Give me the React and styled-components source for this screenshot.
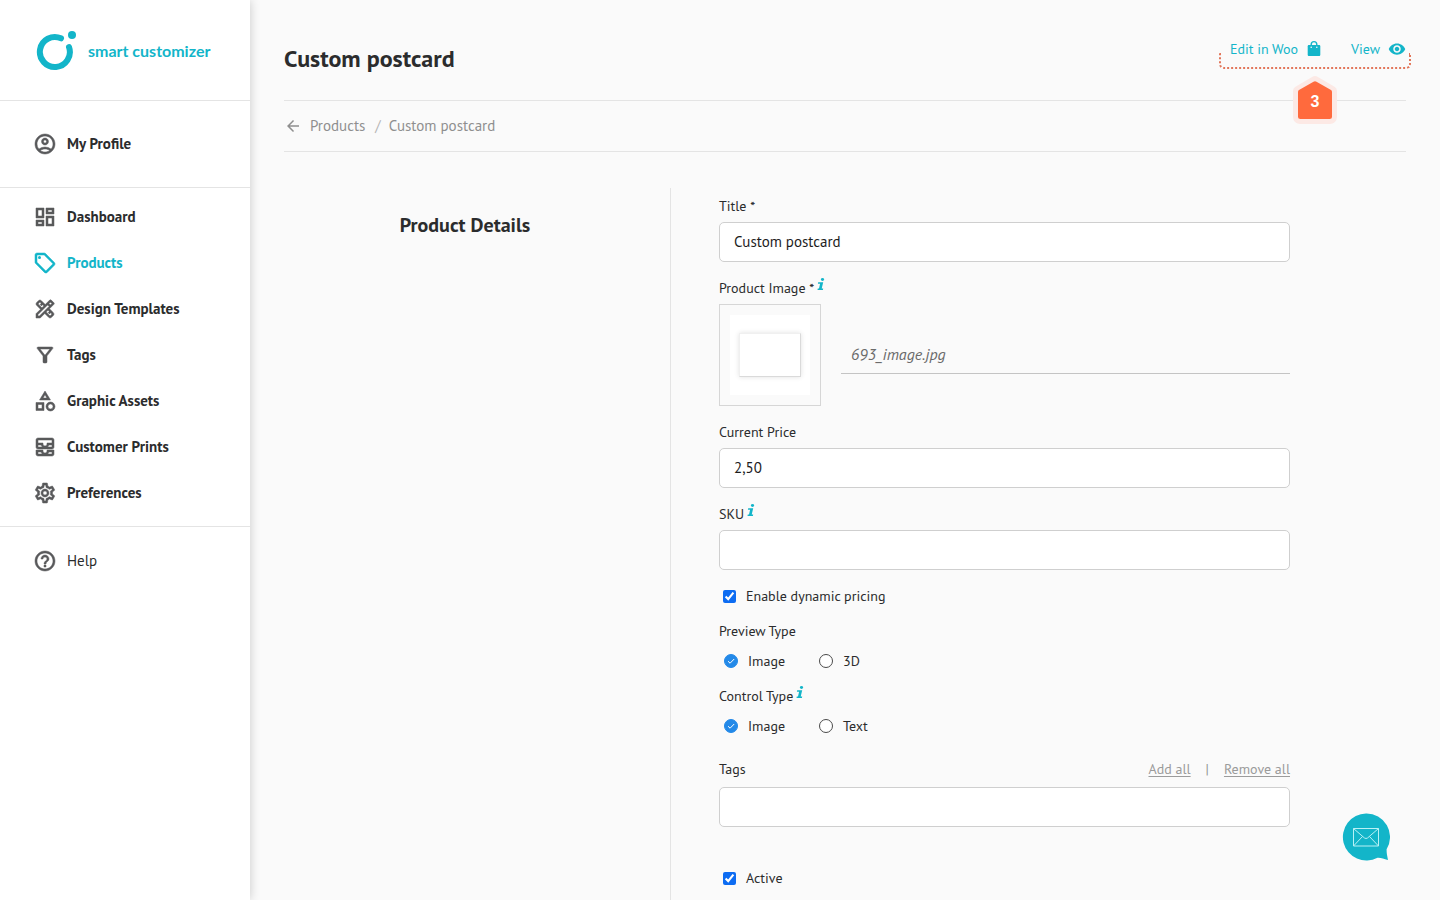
import React, { useState } from 'react'
import styled, { createGlobalStyle, ThemeProvider } from 'styled-components'
import {
  MdArrowBack,
  MdHelpOutline,
  MdOutlineAccountCircle,
  MdOutlineAllInbox,
  MdOutlineCategory,
  MdOutlineDashboard,
  MdOutlineDesignServices,
  MdOutlineFilterAlt,
  MdOutlineSell,
  MdOutlineSettings,
  MdVisibility,
} from 'react-icons/md'

const theme = {
  colors: {
    accent: '#13b5c9',
    text: '#2b2c2d',
    icon: '#58595b',
    muted: '#8f8f8f',
    line: '#e4e4e4',
    field: '#cfcfcf',
    page: '#fafafa',
    callout: '#ff6a3d',
    calloutHalo: '#fce9e5',
    checkbox: '#0d6cf2',
    radio: '#2389e8',
  },
  fonts: {
    body: '"PT Sans", "Noto Sans", sans-serif',
    logo: 'Lato, sans-serif',
  },
}

const GlobalStyle = createGlobalStyle`
  * {
    box-sizing: border-box;
  }

  body {
    margin: 0;
    background: ${props => props.theme.colors.page};
    color: ${props => props.theme.colors.text};
    font-family: ${props => props.theme.fonts.body};
    font-size: 14px;
    line-height: 20px;
  }

  h1, h2, ul, fieldset {
    margin: 0;
    padding: 0;
    border: 0;
  }

  a {
    color: inherit;
    text-decoration: none;
  }
`

const Page = styled.div`
  display: flex;
  min-height: 100vh;
`

const Sidebar = styled.aside`
  flex: 0 0 250px;
  background: #fff;
  box-shadow: 0 0 10px rgba(0, 0, 0, 0.2);
`

const LogoLink = styled.a`
  display: flex;
  align-items: center;
  gap: 10px;
  height: 101px;
  padding: 2px 0 0 36px;
  border-bottom: 1px solid ${props => props.theme.colors.line};
  color: ${props => props.theme.colors.accent};
  font-family: ${props => props.theme.fonts.logo};
  font-size: 16px;
  font-weight: 700;
`

const NavGroup = styled.ul`
  list-style: none;
  padding: ${props => props.$padding};
  border-bottom: ${props => (props.$last ? 'none' : `1px solid ${props.theme.colors.line}`)};
`

const NavLink = styled.a`
  display: flex;
  align-items: center;
  gap: 10px;
  height: 46px;
  padding-left: 33px;
  color: ${props => (props.$active ? props.theme.colors.accent : props.theme.colors.text)};
  font-size: 15px;
  font-weight: ${props => (props.$light ? 400 : 700)};

  svg {
    flex: none;
    width: 24px;
    height: 24px;
    color: ${props => (props.$active ? props.theme.colors.accent : props.theme.colors.icon)};
  }

  path:not([fill='none']) {
    stroke-width: 0.5px;
  }
`

const Main = styled.main`
  flex: 1;
  display: flex;
  flex-direction: column;
  min-width: 0;
  padding: 0 34px;
`

const Header = styled.header`
  display: flex;
  justify-content: space-between;
  align-items: flex-start;
  padding: 39px 0 21px;
  border-bottom: 1px solid ${props => props.theme.colors.line};
`

const PageTitle = styled.h1`
  font-size: 24px;
  font-weight: 700;
  line-height: 40px;
`

const Actions = styled.div`
  position: relative;
  display: flex;
  gap: 29px;
`

const ActionLink = styled.a`
  display: flex;
  align-items: center;
  gap: 8px;
  color: ${props => props.theme.colors.accent};
  font-weight: 500;
`

const Callout = styled.div`
  position: absolute;
  top: 14px;
  left: -11px;
  right: -5px;
  height: 16px;
  border: 2px dotted #e2765a;
  border-top: 0;
  border-radius: 0 0 5px 5px;
  pointer-events: none;
`

const CalloutBadge = styled.div`
  position: absolute;
  top: 22px;
  left: 50%;
  display: grid;
  width: 44px;
  height: 50px;
  margin-left: -22px;
  place-items: center;
  color: #fff;
  font: 700 16px/20px "Liberation Sans", sans-serif;

  > * {
    grid-area: 1 / 1;
  }

  span {
    padding-top: 4px;
  }
`

const Breadcrumbs = styled.nav`
  display: flex;
  align-items: center;
  height: 51px;
  border-bottom: 1px solid ${props => props.theme.colors.line};
  color: ${props => props.theme.colors.muted};
  font-size: 15px;

  svg {
    width: 18px;
    height: 18px;
    margin-right: 8px;
  }
`

const Separator = styled.span`
  margin: 0 8px 0 10px;
  color: #b5b5b5;
`

const Columns = styled.div`
  flex: 1;
  display: flex;
  margin-top: 36px;
`

const SectionColumn = styled.div`
  flex: 0 0 387px;
  padding: 22px 24px 0 0;
  border-right: 1px solid ${props => props.theme.colors.line};
  text-align: center;
`

const SectionTitle = styled.h2`
  font-size: 20px;
  font-weight: 700;
  line-height: 30px;
`

const Form = styled.form`
  flex: 1;
  min-width: 0;
  padding: 8px 116px 12px 48px;
`

const Field = styled.div`
  margin-bottom: 16px;
`

const Label = styled.label`
  display: block;
  width: fit-content;
  margin-bottom: 6px;
`

const InfoMark = styled.svg`
  margin-left: 3px;
  vertical-align: top;
  color: ${props => props.theme.colors.accent};
`

const TextInput = styled.input`
  display: block;
  width: 100%;
  height: 40px;
  padding: 0 14px 2px;
  border: 1px solid ${props => props.theme.colors.field};
  border-radius: 5px;
  background: #fff;
  color: #1d1d1d;
  font: inherit;
  font-size: 15px;
`

const ImageRow = styled.div`
  display: flex;
  align-items: center;
  gap: 20px;
`

const Thumb = styled.div`
  flex: none;
  display: flex;
  width: 102px;
  height: 102px;
  padding: 10px;
  border: 1px solid #d6d6d6;
`

const ThumbPhoto = styled.div`
  flex: 1;
  display: grid;
  place-items: center;
  background: #fff;
`

const Postcard = styled.div`
  width: 62px;
  height: 44px;
  background: #fff;
  border: 1px solid #f0f0f0;
  border-right-color: #dadada;
  border-bottom-color: #dadada;
  box-shadow: 0 0 5px rgba(0, 0, 0, 0.12);
`

const FileInput = styled.input`
  flex: 1;
  min-width: 0;
  height: 38px;
  padding: 0 10px 2px;
  border: 0;
  border-bottom: 1px solid #c4c4c4;
  background: none;
  color: #6b6b6b;
  font: italic 16px/20px ${props => props.theme.fonts.body};
`

const CheckLabel = styled.label`
  display: flex;
  align-items: center;
  gap: 10px;
  width: fit-content;
  padding-left: 4px;
`

const Checkbox = styled.input`
  width: 13px;
  height: 13px;
  margin: 0;
  accent-color: ${props => props.theme.colors.checkbox};
`

const RadioGroup = styled.fieldset`
  display: flex;
  flex-wrap: wrap;
  min-width: 0;
  margin-top: 15px;
`

const Legend = styled.legend`
  padding: 0;
  margin-bottom: 10px;
`

const RadioLabel = styled.label`
  display: flex;
  align-items: center;
  gap: 10px;
  min-width: 95px;
  padding-left: 5px;
`

const Radio = styled.input`
  appearance: none;
  width: 14px;
  height: 14px;
  margin: 0;
  border: 1px solid #4a4a4a;
  border-radius: 50%;
  background: #fff;

  &:checked {
    border-color: ${props => props.theme.colors.radio};
    background: ${props => props.theme.colors.radio}
      url("data:image/svg+xml,%3Csvg xmlns='http://www.w3.org/2000/svg' viewBox='0 0 12 12' fill='none' stroke='white'%3E%3Cpath d='M3 6.2l2.1 2L9.200 4'/%3E%3C/svg%3E")
      center / 12px no-repeat;
  }
`

const TagsHeader = styled.div`
  display: flex;
  align-items: center;
  justify-content: space-between;
  margin: 23px 0 8px;

  label {
    margin: 0;
  }
`

const TagActions = styled.div`
  display: flex;
  gap: 15px;
  color: ${props => props.theme.colors.muted};
`

const TextButton = styled.button`
  padding: 0;
  border: 0;
  background: none;
  color: #9b9b9b;
  font: inherit;
  text-decoration: underline;
  text-underline-offset: 2px;
  cursor: pointer;
`

const ActiveRow = styled.div`
  margin-top: 41px;
`

const ChatButton = styled.button`
  position: fixed;
  right: 50px;
  bottom: 39px;
  width: 48px;
  height: 48px;
  padding: 0;
  border: 0;
  background: none;
  cursor: pointer;

  svg {
    display: block;
  }
`

const navItems = [
  { label: 'Dashboard', icon: MdOutlineDashboard },
  { label: 'Products', icon: MdOutlineSell, active: true },
  { label: 'Design Templates', icon: MdOutlineDesignServices },
  { label: 'Tags', icon: MdOutlineFilterAlt },
  { label: 'Graphic Assets', icon: MdOutlineCategory },
  { label: 'Customer Prints', icon: MdOutlineAllInbox },
  { label: 'Preferences', icon: MdOutlineSettings },
]

function LogoMark() {
  return (
    <svg width="42" height="42" viewBox="0 0 42 42" fill="none">
      <path
        d="M25 8.300A15 15 0 1 0 33 17"
        stroke="currentColor"
        strokeWidth="6"
        strokeLinecap="round"
      />
      <circle cx="36" cy="5" r="4" fill="currentColor" />
    </svg>
  )
}

function Info() {
  return (
    <InfoMark width="8" height="12" viewBox="0 0 8 12" fill="currentColor" aria-hidden="true">
      <ellipse cx="5.500" cy="1.500" rx="1.600" ry="1.400" />
      <path d="M1.200 4.200h5l-1.500 6.200h1.500l-.3 1.500H.5l.3-1.500H2l1.100-4.700H.9z" />
    </InfoMark>
  )
}

function BagIcon() {
  return (
    <svg width="16" height="18" viewBox="0 0 16 18">
      <path
        fill="currentColor"
        d="M3 5h10c.8 0 1.300.5 1.300 1.300v8.400c0 .8-.5 1.300-1.300 1.300H3c-.8 0-1.300-.5-1.300-1.300V6.300C1.700 5.500 2.200 5 3 5z"
      />
      <path d="M5.200 7V4.400a2.800 2.800 0 0 1 5.600 0V7" fill="none" stroke="currentColor" strokeWidth="1.400" />
      <circle cx="5.200" cy="7.300" r=".8" fill="#fafafa" />
      <circle cx="10.800" cy="7.300" r=".8" fill="#fafafa" />
    </svg>
  )
}

function BadgeShape() {
  return (
    <svg width="44" height="50" viewBox="0 0 44 50">
      <path
        d="M22 6l17 10v26a2 2 0 0 1-2 2H7a2 2 0 0 1-2-2V16z"
        fill={theme.colors.calloutHalo}
        stroke={theme.colors.calloutHalo}
        strokeWidth="10"
        strokeLinejoin="round"
      />
      <path
        d="M20.500 6.700q1.500-1 3 0L38 15q1 .6 1 2v24.500a2.500 2.500 0 0 1-2.500 2.500h-29A2.500 2.500 0 0 1 5 41.500V17q0-1.400 1-2z"
        fill={theme.colors.callout}
      />
    </svg>
  )
}

function ChatIcon() {
  return (
    <svg width="48" height="48" viewBox="0 0 48 48" fill="none">
      <path
        fill="#13b5c9"
        d="M24 .5a23.500 23.500 0 1 0 11.500 44.200c3.500-.2 6.500 1 10.300 2.300.6-.5-1.300-5-1.200-10.800A23.500 23.500 0 0 0 24 .5z"
      />
      <path
        stroke="#b9f1f5"
        d="M11.500 15.500h25v17.500h-25zM11.500 15.500l11 9.500q1.500 1 3 0l11-9.500M11.500 33l9-9.500M36.500 33l-9-9.500"
      />
    </svg>
  )
}

function NavItem({ label, icon: Icon, active, light }) {
  return (
    <li>
      <NavLink href="#" $active={active} $light={light}>
        <Icon />
        {label}
      </NavLink>
    </li>
  )
}

function RadioField({ legend, info, name, options }) {
  const [value, setValue] = useState(options[0])

  return (
    <RadioGroup>
      <Legend>
        {legend}
        {info && <Info />}
      </Legend>
      {options.map(option => (
        <RadioLabel key={option}>
          <Radio
            type="radio"
            name={name}
            value={option}
            checked={value === option}
            onChange={() => setValue(option)}
          />
          {option}
        </RadioLabel>
      ))}
    </RadioGroup>
  )
}

function App() {
  return (
    <ThemeProvider theme={theme}>
      <GlobalStyle />
      <Page>
        <Sidebar>
          <LogoLink href="#">
            <LogoMark />
            smart customizer
          </LogoLink>
          <NavGroup $padding="20px 0">
            <NavItem label="My Profile" icon={MdOutlineAccountCircle} />
          </NavGroup>
          <NavGroup $padding="6px 0 10px">
            {navItems.map(item => (
              <NavItem key={item.label} {...item} />
            ))}
          </NavGroup>
          <NavGroup $padding="11px 0" $last>
            <NavItem label="Help" icon={MdHelpOutline} light />
          </NavGroup>
        </Sidebar>

        <Main>
          <Header>
            <PageTitle>Custom postcard</PageTitle>
            <Actions>
              <ActionLink href="#">
                Edit in Woo
                <BagIcon />
              </ActionLink>
              <ActionLink href="#">
                View
                <MdVisibility size={18} />
              </ActionLink>
              <Callout>
                <CalloutBadge>
                  <BadgeShape />
                  <span>3</span>
                </CalloutBadge>
              </Callout>
            </Actions>
          </Header>

          <Breadcrumbs>
            <MdArrowBack />
            <a href="#">Products</a>
            <Separator>/</Separator>
            <span>Custom postcard</span>
          </Breadcrumbs>

          <Columns>
            <SectionColumn>
              <SectionTitle>Product Details</SectionTitle>
            </SectionColumn>

            <Form>
              <Field>
                <Label htmlFor="title">Title *</Label>
                <TextInput id="title" defaultValue="Custom postcard" />
              </Field>
              <Field>
                <Label htmlFor="image">
                  Product Image *<Info />
                </Label>
                <ImageRow>
                  <Thumb>
                    <ThumbPhoto>
                      <Postcard />
                    </ThumbPhoto>
                  </Thumb>
                  <FileInput id="image" defaultValue="693_image.jpg" />
                </ImageRow>
              </Field>
              <Field>
                <Label htmlFor="price">Current Price</Label>
                <TextInput id="price" defaultValue="2,50" />
              </Field>
              <Field>
                <Label htmlFor="sku">
                  SKU<Info />
                </Label>
                <TextInput id="sku" />
              </Field>

              <CheckLabel>
                <Checkbox type="checkbox" defaultChecked />
                Enable dynamic pricing
              </CheckLabel>
              <RadioField legend="Preview Type" name="preview" options={['Image', '3D']} />
              <RadioField legend="Control Type" name="control" options={['Image', 'Text']} info />

              <TagsHeader>
                <Label htmlFor="tags">Tags</Label>
                <TagActions>
                  <TextButton type="button">Add all</TextButton>
                  <span>|</span>
                  <TextButton type="button">Remove all</TextButton>
                </TagActions>
              </TagsHeader>
              <TextInput id="tags" />

              <ActiveRow>
                <CheckLabel>
                  <Checkbox type="checkbox" defaultChecked />
                  Active
                </CheckLabel>
              </ActiveRow>
            </Form>
          </Columns>
        </Main>
      </Page>

      <ChatButton type="button" aria-label="Contact us">
        <ChatIcon />
      </ChatButton>
    </ThemeProvider>
  )
}

export default App
